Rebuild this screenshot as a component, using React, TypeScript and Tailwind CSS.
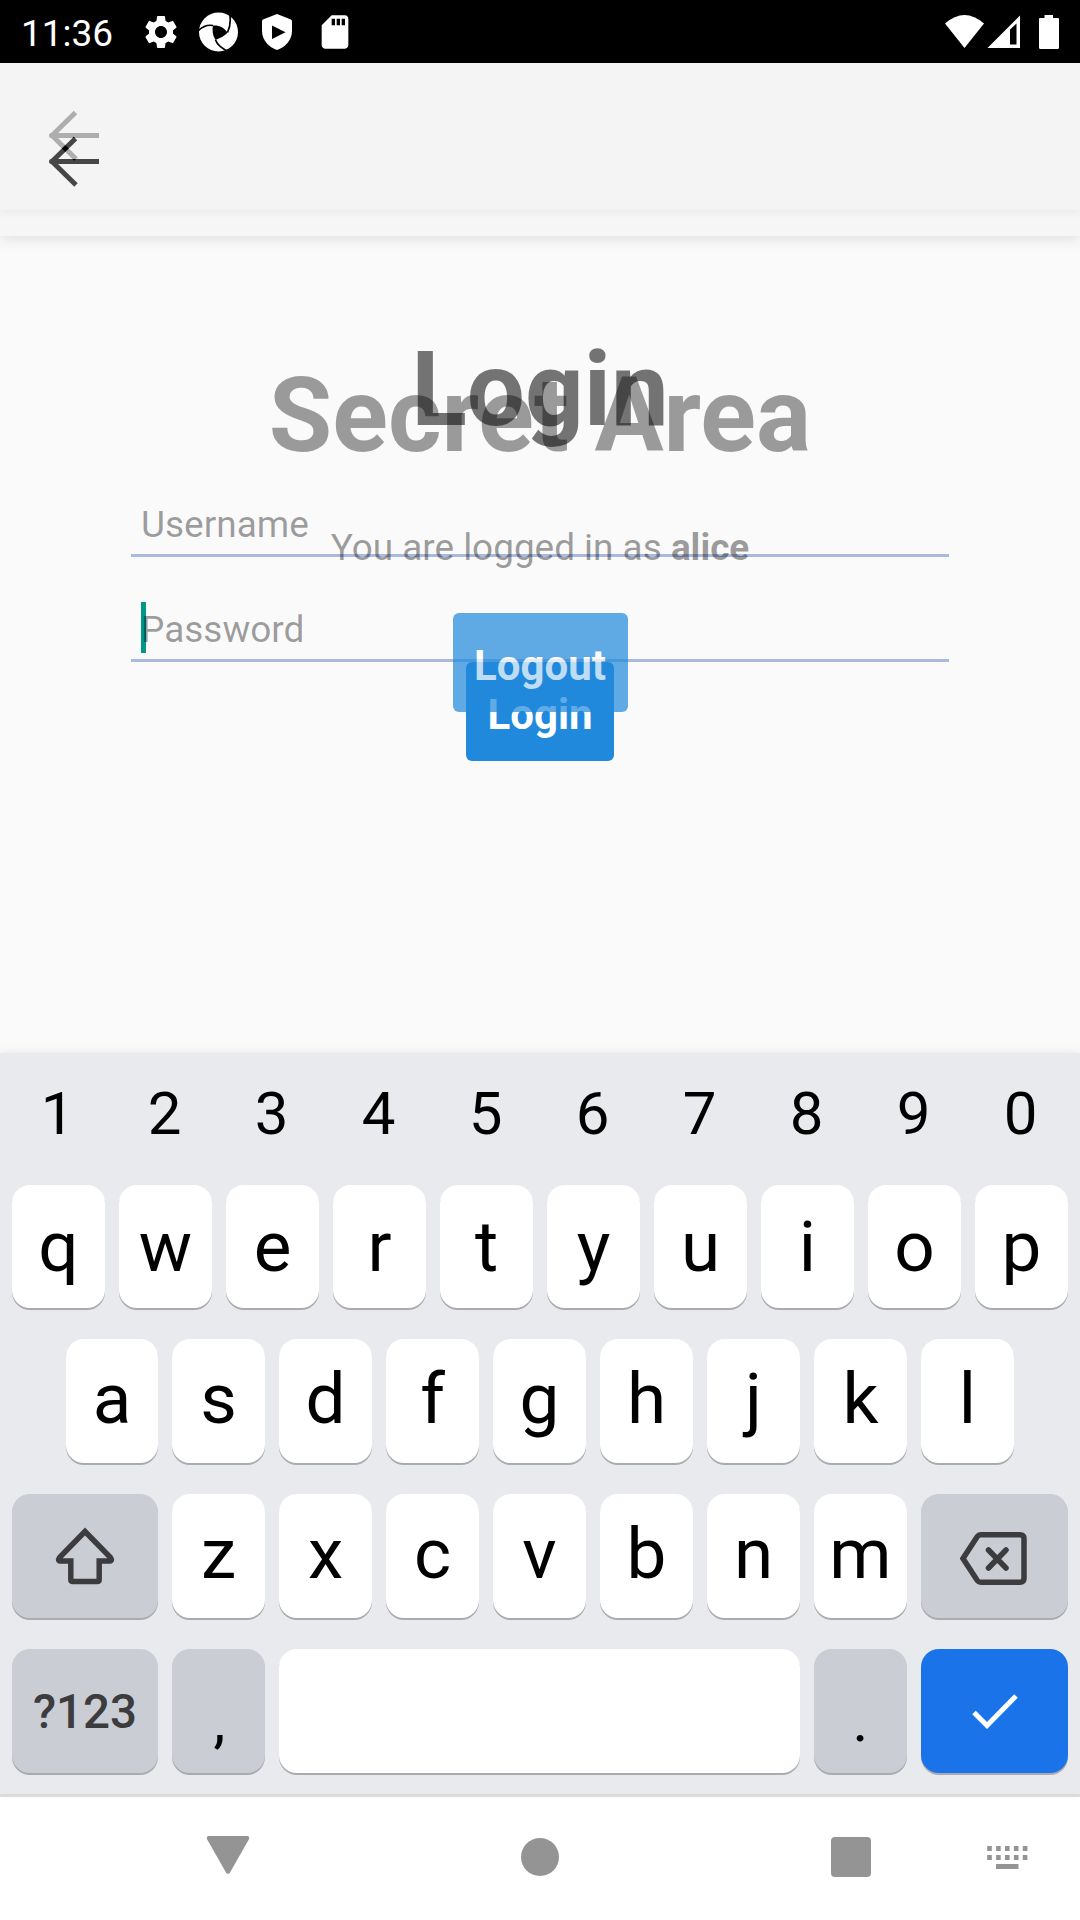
import { ReactNode } from "react";
import { MdSdCard, MdSettings } from "react-icons/md";

function PinwheelIcon() {
  return (
    <svg className="ml-[17px] size-10" viewBox="0 0 40 40">
      <circle cx="20.500" cy="20" r="19.500" fill="#fff" />
      <path d="M15 13.500C21 13 26 15.500 29.500 20.500C26.500 24.500 22 26 17.500 28C14.500 23.500 14 18 15 13.500Z" fill="#000" />
      <path d="M29.500 20.500C32.500 14 33 8 31.500 1M15 13.500C9.500 12.500 5 14 0 19M17.500 28C19.500 33 24 37 32 40" fill="none" stroke="#000" strokeWidth="1.700" />
    </svg>
  );
}

function StatusBar() {
  return (
    <div className="flex h-[63px] items-center bg-black text-white">
      <span className="ml-[21px] w-[95px] pt-[4px] text-[37px] leading-none">11:36</span>
      <MdSettings className="ml-[25px] size-10" />
      <PinwheelIcon />
      <svg className="ml-6 h-9 w-[30px]" viewBox="0 0 30 36">
        <path d="M15 0L29 5.500Q30 6 30 7V17C30 26 23 33.500 15 36C7 33.500 0 26 0 17V7Q0 6 1 5.500Z" fill="#fff" />
        <path d="M10 11.500V25L23.500 18.200Z" fill="#000" />
      </svg>
      <MdSdCard className="ml-[23px] size-10" />
      <svg className="ml-auto h-[34px] w-[115px]" viewBox="0 0 115 34">
        <path d="M0 8.500Q19.500 -8.500 39 8.500L19.500 33Z" fill="#fff" />
        <path d="M42.500 33L75 .5V33ZM65 14.500V29.500H71.500V8.500Z" fill="#fff" fillRule="evenodd" />
        <path d="M99.500 0H108V3H113Q114 3 114 4V32.500Q114 34 112.500 34H95.500Q94 34 94 32.500V4Q94 3 95 3H99.500Z" fill="#fff" />
      </svg>
      <span className="w-5" />
    </div>
  );
}

function BackArrow() {
  return (
    <svg className="h-[52px] w-[52px]" viewBox="0 0 52 52">
      <path d="M27.500 2.500L4 25.500L28 49M4 25.500H51" fill="none" stroke="#000" strokeWidth="5" strokeLinejoin="bevel" />
      <circle cx="3.500" cy="25.500" r="2.500" />
    </svg>
  );
}

const headingStyle = "mt-[119px] pt-px text-center text-[103px] leading-[119px] font-bold text-black/54";
const buttonStyle =
  "h-[99px] shrink-0 rounded-md bg-[#2089dc] pt-[6px] text-center text-[42px] leading-[93px] font-bold text-white";

function LoginScreen() {
  return (
    <div className="col-start-1 row-start-1 flex flex-col items-center">
      <div className="h-[147px] w-full bg-[#f4f4f4] pt-[47px] pl-12 shadow-[0_2px_8px_rgba(0,0,0,0.18)]">
        <BackArrow />
      </div>
      <h1 className={headingStyle}>Login</h1>
      <div className="mt-[51px] h-[57px] w-[818px] border-b-3 border-[#a9bade] pl-[10px] text-[37px] leading-[49px] text-black/38">
        Username
      </div>
      <div className="relative mt-12 h-[57px] w-[818px] border-b-3 border-[#a9bade] pl-[10px] text-[37px] leading-[49px] text-black/38">
        <span className="absolute -top-[3px] left-[10px] h-[51px] w-[5px] bg-[#009688]" />
        <span className="relative">Password</span>
      </div>
      <button className={`${buttonStyle} w-[148px]`}>Login</button>
    </div>
  );
}

function SecretScreen() {
  return (
    <div className="relative col-start-1 row-start-1 flex flex-col items-center opacity-71">
      <div className="h-[173px] w-full bg-[#f5f5f5] pt-[73px] pl-12 shadow-[0_3px_12px_rgba(0,0,0,0.15)]">
        <BackArrow />
      </div>
      <h1 className={headingStyle}>Secret Area</h1>
      <p className="mt-12 text-[36.900px] leading-[49px] text-black/54">
        You are logged in as <b>alice</b>
      </p>
      <button className={`${buttonStyle} mt-[41px] w-[175px]`}>Logout</button>
    </div>
  );
}

const keyBase = "flex items-center justify-center rounded-[18px] shadow-[0_2px_0_#a9abae]";

function Key({ className, children }: { className: string; children?: ReactNode }) {
  return <div className={`${keyBase} ${className}`}>{children}</div>;
}

function LetterKey({ children }: { children: string }) {
  return <Key className="w-[93px] bg-white pb-[5px] text-[71px] leading-none">{children}</Key>;
}

function Keyboard() {
  return (
    <div className="relative flex h-[741px] flex-col bg-[#e8eaed] text-black shadow-[0_-1px_8px_rgba(0,0,0,0.08)]">
      <div className="flex h-[132px] gap-[14px] pl-[11px] text-[60px] leading-[121px]">
        {[..."1234567890"].map((digit) => (
          <div key={digit} className="w-[93px] text-center">{digit}</div>
        ))}
      </div>
      <div className="flex h-[123px] gap-[14px] px-3">
        {[..."qwertyuiop"].map((letter) => (
          <Key key={letter} className="w-[93px] bg-white pb-px text-[71px] leading-none">{letter}</Key>
        ))}
      </div>
      <div className="mt-[31px] flex h-[124px] gap-[14px] pl-[66px]">
        <Key className="w-[92px] bg-white pb-[5px] text-[71px] leading-none">a</Key>
        {[..."sdfghjkl"].map((letter) => (
          <LetterKey key={letter}>{letter}</LetterKey>
        ))}
      </div>
      <div className="mt-[31px] flex h-[124px] gap-[14px] px-3">
        <Key className="w-[146px] bg-[#cbcdd5]">
          <svg className="h-[58px] w-[60px]" viewBox="0 0 60 58">
            <path d="M30 4.500L4.500 30.500Q2 34 6 34H15.800V52.500Q15.800 54.500 17.800 54.500H42.200Q44.200 54.500 44.200 52.500V34H54Q58 34 55.500 30.500Z" fill="none" stroke="#3c3c3e" strokeWidth="5.500" />
          </svg>
        </Key>
        {[..."zxcvbnm"].map((letter) => (
          <LetterKey key={letter}>{letter}</LetterKey>
        ))}
        <Key className="w-[147px] bg-[#cbcdd5] pt-[5px] pr-[2px]">
          <svg className="h-[53px] w-[67px]" viewBox="0 0 67 53">
            <path d="M20.500 2.800H60Q64 2.800 64 6.800V46.200Q64 50.200 60 50.200H20.500Q18.500 50.200 17.300 48.500L3 26.500L17.300 4.500Q18.500 2.800 20.500 2.800Z" fill="none" stroke="#3c3c3e" strokeWidth="5.500" />
            <path d="M28.500 18L46 36M46 18L28.500 36" stroke="#3c3c3e" strokeWidth="5.500" strokeLinecap="round" />
          </svg>
        </Key>
      </div>
      <div className="mt-[31px] flex h-[124px] gap-[14px] px-3">
        <Key className="w-[146px] bg-[#cbcdd5] pt-[4px] text-[47.500px] leading-none font-medium text-[#3c3c3e]">?123</Key>
        <Key className="w-[93px] bg-[#cbcdd5] pt-[20px] pl-[2px] text-[60px] leading-none">,</Key>
        <Key className="w-[521px] bg-white" />
        <Key className="w-[93px] bg-[#cbcdd5] pt-[20px] text-[60px] leading-none">.</Key>
        <Key className="w-[147px] bg-[#1b73ea]">
          <svg className="mb-px h-[36px] w-[48px]" viewBox="0 0 48 36">
            <path d="M3 19.500L16 32.500L45 3" fill="none" stroke="#fff" strokeWidth="5" />
          </svg>
        </Key>
      </div>
    </div>
  );
}

function NavigationBar() {
  return (
    <div className="flex h-[126px] items-center border-t-3 border-[#dfe1e1] bg-white pb-1 text-[#949494]">
      <svg className="mb-1 ml-[206px] h-[38px] w-[44px]" viewBox="0 0 44 38" fill="currentColor">
        <path d="M2.500 0H41.500Q44 .5 42.800 3.500L24 36.500Q22 39 20 36.500L1.200 3.500Q0 .5 2.500 0Z" />
      </svg>
      <span className="ml-[271px] size-[38px] rounded-full bg-[#949494]" />
      <span className="ml-[272px] size-10 rounded bg-[#949494]" />
      <svg className="mt-[2px] ml-[116px] h-[23px] w-[41px]" viewBox="0 0 41 23" fill="currentColor">
        {[0, 1, 2, 3, 4].map((column) => (
          <path key={column} d={`M${column * 8.9 + 0.2} 0h4.600v5h-4.600zM${column * 8.9 + 0.2} 9h4.600v5h-4.600z`} />
        ))}
        <path d="M9 18h22.500v5H9z" />
      </svg>
    </div>
  );
}

export default function App() {
  return (
    <div className="flex h-[1920px] w-[1080px] flex-col overflow-hidden bg-[#fafafa] font-['Roboto',sans-serif]">
      <StatusBar />
      <div className="grid h-[990px] grid-cols-1 items-start">
        <LoginScreen />
        <SecretScreen />
      </div>
      <Keyboard />
      <NavigationBar />
    </div>
  );
}
